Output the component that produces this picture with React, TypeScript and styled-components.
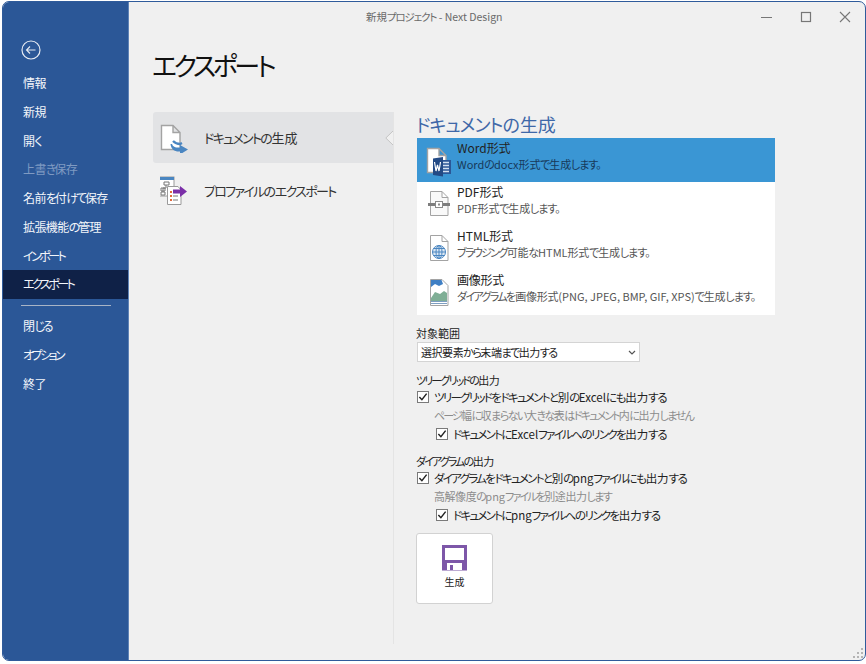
import React from 'react';
import styled, { createGlobalStyle } from 'styled-components';

const FONT = '"Noto Sans CJK JP", "Noto Sans", sans-serif';

const GlobalStyle = createGlobalStyle`
  html, body {
    margin: 0;
    padding: 0;
    background: #ffffff;
  }
  * {
    box-sizing: border-box;
  }
`;

const menuTop = [
  { label: '情報' },
  { label: '新規' },
  { label: '開く' },
  { label: '上書き保存', disabled: true },
  { label: '名前を付けて保存' },
  { label: '拡張機能の管理' },
  { label: 'インポート' },
  { label: 'エクスポート', active: true },
];

const menuBottom = [{ label: '閉じる' }, { label: 'オプション' }, { label: '終了' }];

const KataRun = styled.span`
  letter-spacing: var(--kata);
`;
const HiraRun = styled.span`
  letter-spacing: var(--hira);
`;
const KanjiRun = styled.span`
  letter-spacing: var(--kanji);
`;

// the reference font sets kana much narrower than Noto, so each script run gets its own tracking
const Jp = ({ children }: { children: string }) => {
  const runs = children.match(/[\u30A0-\u30FF]+|[\u3000-\u303F\u3040-\u309F]+|[\u4E00-\u9FFF]+|[^\u3000-\u9FFF]+/g) || [];
  return (
    <>
      {runs.map((run, i) => {
        if (/^[\u30A0-\u30FF]/.test(run)) return <KataRun key={i}>{run}</KataRun>;
        if (/^[\u3000-\u309F]/.test(run)) return <HiraRun key={i}>{run}</HiraRun>;
        if (/^[\u4E00-\u9FFF]/.test(run)) return <KanjiRun key={i}>{run}</KanjiRun>;
        return <span key={i}>{run}</span>;
      })}
    </>
  );
};

const PageIcon = () => (
  <path d="M1.5 1.5H13L20 8.5V25.5H1.5Z M13 1.5V8.5H20" fill="#fff" stroke="#a3a3a3" strokeWidth="1.4" />
);

const GenerateIcon = () => (
  <svg width="30" height="30" viewBox="0 -1 30 30">
    <PageIcon />
    <path d="M12 20c1 3 4 4 8 3.500V21l8 4.500-8 5V27.500c-5 .5-9-2-9.500-7.500Z" fill="#4a86c1" />
    <path d="M13 17c2 2 4 3 7 3l2-1" fill="none" stroke="#4a86c1" strokeWidth="2.4" />
  </svg>
);

const ProfileIcon = () => (
  <svg width="30" height="30" viewBox="2 -1 30 30">
    <rect x="1" y="1" width="15" height="19" fill="#fff" stroke="#9a9a9a" />
    <rect x="1" y="1" width="15" height="3" fill="#4a86c1" />
    <path d="M6 6h5v3H6ZM3 12h4v3H3Zm0 4h4v3H3Zm5-7v3H5v4" fill="none" stroke="#777" />
    <path d="M9.500 10.500H20L23 14V28.500H9.500Z" fill="#fff" stroke="#9a9a9a" />
    <path d="M12 15h2v2h-2Zm0 4h2v2h-2Zm0 4h2v2h-2Z" fill="#e0683c" />
    <path d="M15 16h5M15 20h5M15 24h5" stroke="#777" />
    <path d="M15 13.500h7V10l7 5.500-7 5.500v-3.500h-7Z" fill="#7b2fa8" />
  </svg>
);

const WordIcon = () => (
  <svg width="26" height="30" viewBox="0 0 26 30">
    <PageIcon />
    <rect x="14" y="13" width="11" height="14" fill="#2b5797" />
    <path d="M17 15.500h6M17 18.500h6M17 21.500h6M17 24.500h6" stroke="#d3e0f0" strokeWidth="1.300" />
    <path d="M7 11.500 17 10V29.500L7 28Z" fill="#234a85" />
    <path d="M8.500 15l1.500 9 1.500-6 1.500 6 1.500-9" fill="none" stroke="#fff" strokeWidth="1.200" />
  </svg>
);

const PdfIcon = () => (
  <svg width="26" height="30" viewBox="0 0 26 30">
    <path d="M4.500 .5H16L22 6.500V24.500H4.500Z M16 .5V6.500H22" fill="#f9f9f9" stroke="#a3a3a3" />
    <rect x="2" y="12" width="7" height="3" fill="#7d7d7d" />
    <rect x="17" y="12" width="7" height="3" fill="#7d7d7d" />
    <rect x="9.500" y="10.500" width="7" height="6" fill="#fff" stroke="#8a8a8a" />
    <rect x="12" y="12.500" width="2" height="2" fill="#8a8a8a" />
  </svg>
);

const HtmlIcon = () => (
  <svg width="26" height="30" viewBox="-3 0 26 30">
    <path d="M1.500 .5H13L19 6.500V25.500H1.500Z M13 .5V6.500H19" fill="#fff" stroke="#a3a3a3" />
    <g fill="none" stroke="#4a86c1" strokeWidth="1">
      <circle cx="10" cy="17" r="6.500" fill="#dbe7f3" />
      <ellipse cx="10" cy="17" rx="3" ry="6.500" />
      <path d="M3.500 17h13M4.500 13.500h11M4.500 20.500h11M10 10.500v13" />
    </g>
  </svg>
);

const ImageIcon = () => (
  <svg width="26" height="30" viewBox="-3 0 26 30">
    <path d="M1.500 .5H13L19 6.500V26.500H1.500Z" fill="#fff" stroke="#a3a3a3" />
    <path d="M2 1H12.500L14 5 10 7 6 5 2 8Z" fill="#3f7fc4" />
    <path d="M2 19l4-6 5 2 4-3 3 2v8H2Z" fill="#7fae95" />
    <path d="M2 22.500h16M2 24.500h16" stroke="#7d9fc2" strokeWidth="1" />
  </svg>
);

const SaveIcon = () => (
  <svg width="26" height="26" viewBox="0 0 26 26">
    <path d="M0 0H25V25.500H0ZM3 3V15H22V3ZM5 18V25H20V18ZM8 20H11V25H8Z" fill="#7d57a8" fillRule="evenodd" />
  </svg>
);

const CheckMark = () => (
  <svg width="10" height="10" viewBox="0 0 11 11">
    <path d="M1.500 5.500 4.300 8.500 9.500 1.800" fill="none" stroke="#222" strokeWidth="1.600" />
  </svg>
);

const exportKinds = [
  { title: 'Word形式', desc: 'Wordのdocx形式で生成します。', icon: <WordIcon />, selected: true },
  { title: 'PDF形式', desc: 'PDF形式で生成します。', icon: <PdfIcon /> },
  { title: 'HTML形式', desc: 'ブラウジング可能なHTML形式で生成します。', icon: <HtmlIcon /> },
  { title: '画像形式', desc: 'ダイアグラムを画像形式(PNG, JPEG, BMP, GIF, XPS)で生成します。', icon: <ImageIcon /> },
];

const CheckRow = ({ nested, children }: { nested?: boolean; children: string }) => (
  <CheckLine $nested={nested}>
    <CheckBox>
      <CheckMark />
    </CheckBox>
    <span>
      <Jp>{children}</Jp>
    </span>
  </CheckLine>
);

export default function App() {
  return (
    <>
      <GlobalStyle />
      <Window>
        <Sidebar>
          <BackButton>
            <svg width="20" height="20" viewBox="0 0 20 20">
              <circle cx="10" cy="10" r="9" fill="none" stroke="#e6ebf3" strokeWidth="1.200" />
              <path d="M14.500 10H5.500M9 6.500 5.500 10 9 13.500" fill="none" stroke="#e6ebf3" strokeWidth="1.100" />
            </svg>
          </BackButton>
          {menuTop.map((m) => (
            <MenuItem key={m.label} $active={m.active} $disabled={m.disabled}>
              <Jp>{m.label}</Jp>
            </MenuItem>
          ))}
          <MenuDivider />
          {menuBottom.map((m) => (
            <MenuItem key={m.label}>
              <Jp>{m.label}</Jp>
            </MenuItem>
          ))}
        </Sidebar>
        <Main>
          <TitleBar>
            <WindowTitle>
              <Jp>新規プロジェクト - Next Design</Jp>
            </WindowTitle>
            <WindowButtons>
              <svg width="12" height="12" viewBox="0 0 12 12">
                <path d="M0 6.500H11" stroke="#777" strokeWidth="1" />
              </svg>
              <svg width="12" height="12" viewBox="0 0 12 12">
                <rect x="1.500" y="1.500" width="9" height="9" fill="none" stroke="#777" strokeWidth="1.200" />
              </svg>
              <svg width="12" height="12" viewBox="0 0 12 12">
                <path d="M1 1 11 11M11 1 1 11" stroke="#777" strokeWidth="1.100" />
              </svg>
            </WindowButtons>
          </TitleBar>
          <PageTitle>
            <Jp>エクスポート</Jp>
          </PageTitle>
          <Columns>
            <LeftColumn>
              <SideOption $selected>
                <SideIcon>
                  <GenerateIcon />
                </SideIcon>
                <span>
                  <Jp>ドキュメントの生成</Jp>
                </span>
                <Caret>
                  <svg width="8" height="14" viewBox="0 0 8 14">
                    <path d="M8 0 .8 7 8 14" fill="#f0f0f0" stroke="#c4c4c4" />
                  </svg>
                </Caret>
              </SideOption>
              <SideOption>
                <SideIcon>
                  <ProfileIcon />
                </SideIcon>
                <span>
                  <Jp>プロファイルのエクスポート</Jp>
                </span>
              </SideOption>
            </LeftColumn>
            <RightColumn>
              <SectionTitle>
                <Jp>ドキュメントの生成</Jp>
              </SectionTitle>
              <KindList>
                {exportKinds.map((k) => (
                  <KindRow key={k.title} $selected={k.selected}>
                    <KindIcon>{k.icon}</KindIcon>
                    <KindText>
                      <KindTitle>
                        <Jp>{k.title}</Jp>
                      </KindTitle>
                      <KindDesc $selected={k.selected}>
                        <Jp>{k.desc}</Jp>
                      </KindDesc>
                    </KindText>
                  </KindRow>
                ))}
              </KindList>
              <FieldLabel>
                <Jp>対象範囲</Jp>
              </FieldLabel>
              <SelectBox>
                <span>
                  <Jp>選択要素から末端まで出力する</Jp>
                </span>
                <svg width="8" height="5" viewBox="0 0 8 5">
                  <path d="M1 1 4 4 7 1" fill="none" stroke="#555" strokeWidth="1.200" />
                </svg>
              </SelectBox>
              <OptionGroup>
                <GroupLabel>
                  <Jp>ツリーグリッドの出力</Jp>
                </GroupLabel>
                <CheckRow>ツリーグリッドをドキュメントと別のExcelにも出力する</CheckRow>
                <Hint>
                  <Jp>ページ幅に収まらない大きな表はドキュメント内に出力しません</Jp>
                </Hint>
                <CheckRow nested>ドキュメントにExcelファイルへのリンクを出力する</CheckRow>
              </OptionGroup>
              <OptionGroup>
                <GroupLabel>
                  <Jp>ダイアグラムの出力</Jp>
                </GroupLabel>
                <CheckRow>ダイアグラムをドキュメントと別のpngファイルにも出力する</CheckRow>
                <Hint>
                  <Jp>高解像度のpngファイルを別途出力します</Jp>
                </Hint>
                <CheckRow nested>ドキュメントにpngファイルへのリンクを出力する</CheckRow>
              </OptionGroup>
              <GenerateButton>
                <SaveIcon />
                <span>生成</span>
              </GenerateButton>
            </RightColumn>
          </Columns>
        </Main>
        <ResizeGrip>
          <svg width="12" height="12" viewBox="0 0 12 12">
            <path d="M8 0h2v2H8ZM4 4h2v2H4ZM8 4h2v2H8ZM0 8h2v2H0ZM4 8h2v2H4ZM8 8h2v2H8Z" fill="#b4b4b4" />
          </svg>
        </ResizeGrip>
      </Window>
    </>
  );
}

const Window = styled.div`
  --kata: -0.17em;
  --hira: -0.14em;
  --kanji: -0.04em;
  position: relative;
  display: flex;
  width: 864px;
  height: 660px;
  margin: 1px 0 0 2px;
  border: 1px solid #2f5b9b;
  border-radius: 7px;
  overflow: hidden;
  background: #f0f0f0;
  font-family: ${FONT};
  font-feature-settings: 'palt';
  color: #1a1a1a;
`;

const Sidebar = styled.nav`
  --kata: -0.21em;
  --hira: -0.17em;
  --kanji: -0.05em;
  flex: 0 0 126px;
  display: flex;
  flex-direction: column;
  padding-top: 38px;
  background: #2b5797;
  border-right: 1px solid #5f83b6;
`;

const BackButton = styled.div`
  display: flex;
  height: 20px;
  margin: 0 0 9px 18px;
`;

const MenuItem = styled.div<{ $active?: boolean; $disabled?: boolean }>`
  height: 28.75px;
  padding-left: 20px;
  line-height: 27px;
  font-size: 12px;
  white-space: nowrap;
  color: ${(p) => (p.$disabled ? '#7f9ac2' : '#f2f5fa')};
  background: ${(p) => (p.$active ? '#0f2147' : 'transparent')};
`;

const MenuDivider = styled.div`
  height: 1px;
  margin: 6px 17px 6px 18px;
  background: #a8b4c6;
`;

const Main = styled.main`
  flex: 1;
  display: flex;
  flex-direction: column;
  min-width: 0;
`;

const TitleBar = styled.header`
  --kata: -0.11em;
  --hira: 0;
  --kanji: 0;
  display: flex;
  align-items: center;
  height: 29px;
  padding-left: 237px;
`;

const WindowTitle = styled.div`
  font-size: 10.5px;
  color: #6a6a6a;
  white-space: nowrap;
`;

const WindowButtons = styled.div`
  display: flex;
  gap: 27px;
  margin-left: auto;
  padding-right: 14px;
`;

const PageTitle = styled.h1`
  --kata: -0.13em;
  margin: 13px 0 0 23px;
  height: 42px;
  font-size: 26px;
  line-height: 42px;
  font-weight: 400;
  color: #111;
`;

const Columns = styled.div`
  display: flex;
  padding-left: 24px;
  margin-top: 26px;
`;

const LeftColumn = styled.div`
  --kata: -0.13em;
  --hira: -0.1em;
  --kanji: 0;
  flex: 0 0 240px;
  display: flex;
  flex-direction: column;
  gap: 1px;
`;

const SideOption = styled.div<{ $selected?: boolean }>`
  position: relative;
  display: flex;
  align-items: center;
  height: ${(p) => (p.$selected ? '51px' : '52px')};
  font-size: 13px;
  color: #333;
  white-space: nowrap;
  border-radius: 3px 0 0 3px;
  background: ${(p) => (p.$selected ? '#e2e3e5' : 'transparent')};
`;

const SideIcon = styled.div`
  display: flex;
  flex: 0 0 51px;
  padding-left: 7px;
`;

const Caret = styled.div`
  position: absolute;
  top: 19px;
  right: 0;
  display: flex;
`;

const RightColumn = styled.div`
  flex: 1;
  height: 532px;
  padding-left: 22px;
  border-left: 1px solid #e4e4e4;
`;

const SectionTitle = styled.h2`
  --kata: -0.05em;
  --hira: 0;
  --kanji: 0;
  margin: 0;
  height: 26px;
  font-size: 18px;
  line-height: 24px;
  font-weight: 400;
  color: #3f68a8;
  white-space: nowrap;
`;

const KindList = styled.div`
  display: flex;
  flex-direction: column;
  width: 358px;
  height: 177px;
  margin-left: 1px;
  background: #ffffff;
`;

const KindRow = styled.div<{ $selected?: boolean }>`
  display: flex;
  height: 44px;
  background: ${(p) => (p.$selected ? '#3a96d4' : 'transparent')};
`;

const KindIcon = styled.div`
  flex: 0 0 40px;
  display: flex;
  padding: 9px 0 0 9px;
`;

const KindText = styled.div`
  --kata: -0.15em;
  --hira: -0.09em;
  --kanji: -0.02em;
  display: flex;
  flex-direction: column;
  padding-top: 2px;
`;

const KindTitle = styled.div`
  height: 16px;
  font-size: 12px;
  line-height: 16px;
  color: #222;
  white-space: nowrap;
`;

const KindDesc = styled.div<{ $selected?: boolean }>`
  font-size: 11px;
  line-height: 16px;
  color: ${(p) => (p.$selected ? '#17395a' : '#555')};
  white-space: nowrap;
`;

const FieldLabel = styled.div`
  --kanji: 0;
  margin-top: 10px;
  height: 17px;
  font-size: 11px;
  line-height: 17px;
  color: #222;
`;

const SelectBox = styled.div`
  display: flex;
  align-items: center;
  justify-content: space-between;
  width: 223px;
  height: 20px;
  margin-left: 1px;
  padding: 0 3px;
  font-size: 11px;
  color: #222;
  background: #fff;
  border: 1px solid #d4d4d4;
`;

const OptionGroup = styled.div`
  margin-top: 10px;
  & + & {
    margin-top: 10px;
  }
`;

const GroupLabel = styled.div`
  height: 16px;
  font-size: 11px;
  line-height: 16px;
  color: #222;
`;

const CheckLine = styled.div<{ $nested?: boolean }>`
  --kata: -0.15em;
  --hira: -0.12em;
  --kanji: 0;
  display: flex;
  align-items: center;
  gap: 5px;
  height: 18px;
  margin-left: ${(p) => (p.$nested ? '20px' : '1px')};
  font-size: 11.5px;
  color: #222;
  white-space: nowrap;
`;

const CheckBox = styled.span`
  display: flex;
  align-items: center;
  justify-content: center;
  flex: 0 0 12px;
  height: 12px;
  background: #fff;
  border: 1px solid #7a7a7a;
`;

const Hint = styled.div`
  height: 19px;
  margin-left: 18px;
  font-size: 11px;
  line-height: 18px;
  color: #8c8c8c;
  white-space: nowrap;
`;

const GenerateButton = styled.button`
  display: flex;
  flex-direction: column;
  align-items: center;
  width: 77px;
  height: 71px;
  margin-top: 9px;
  padding: 11px 0 0;
  background: #fff;
  border: 1px solid #d2d2d2;
  border-radius: 3px;
  font-family: ${FONT};
  font-size: 10px;
  color: #222;
  span {
    margin-top: 3px;
  }
`;

const ResizeGrip = styled.div`
  position: absolute;
  right: 0;
  bottom: 0;
  display: flex;
`;
